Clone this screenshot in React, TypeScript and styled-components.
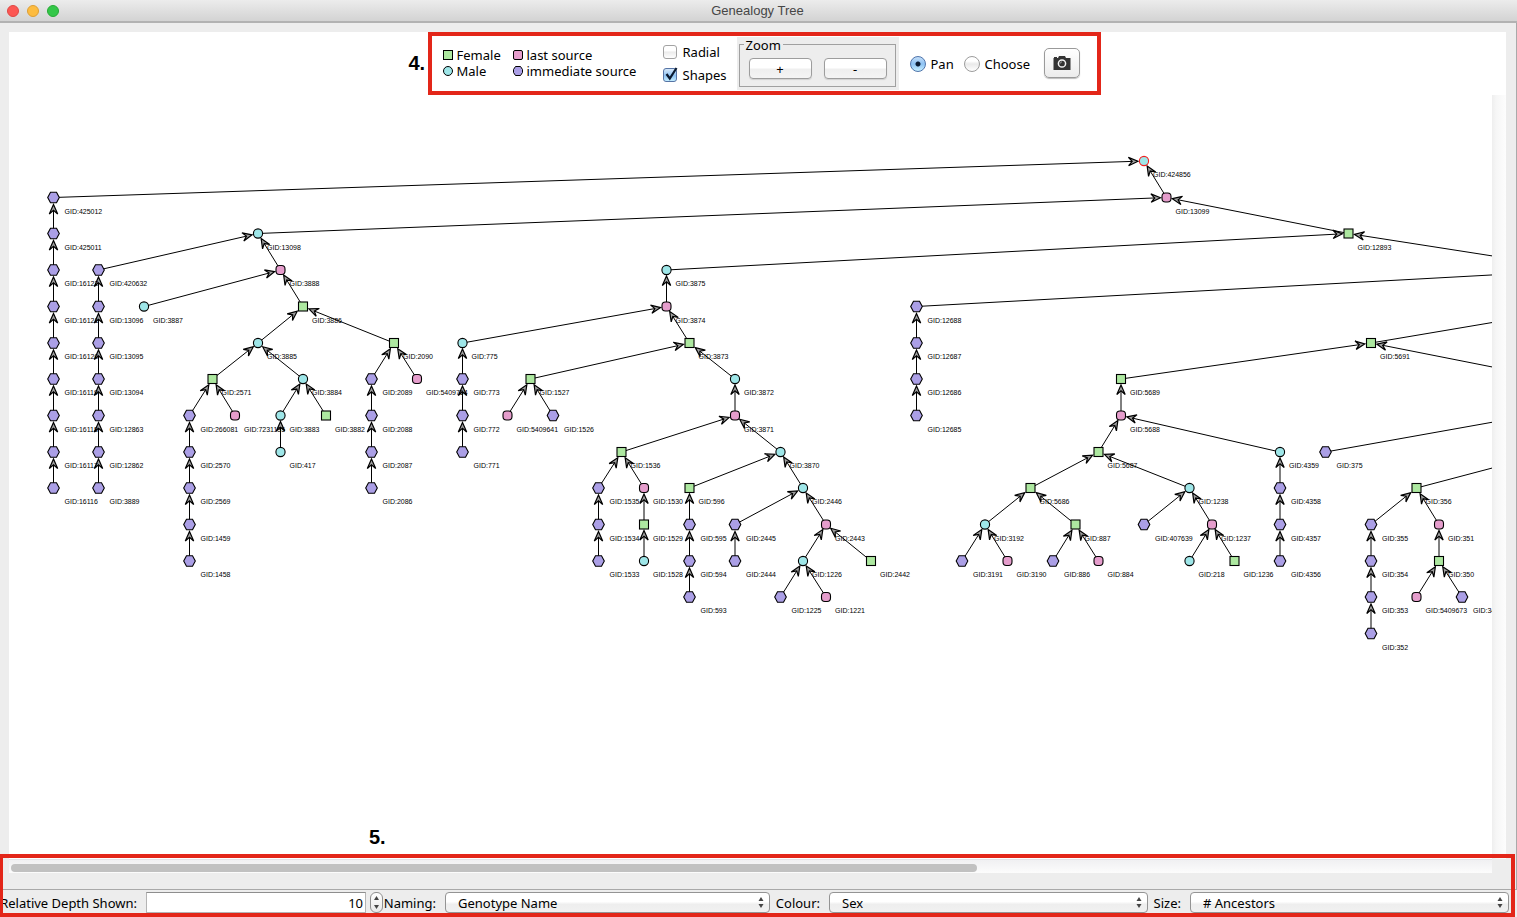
import React, { useState } from 'react';
import styled, { createGlobalStyle } from 'styled-components';

const UI_FONT = '"Noto Sans", "Open Sans", sans-serif';
const TITLE_FONT = '"Liberation Sans", Arial, sans-serif';
const MARK_RED = '#e32619';

type Kind = 'female' | 'male' | 'last' | 'immediate';

const FILL: Record<Kind, string> = {
  female: '#ade8a0',
  male: '#9ee6e8',
  last: '#e59dcc',
  immediate: '#ab9fe6',
};

interface TreeNode {
  id: string;
  col: number;
  row: number;
  kind: Kind;
  parent?: string;
  hidden?: boolean;
}

const n = (id: string, col: number, row: number, kind: Kind, parent?: string): TreeNode => ({
  id,
  col,
  row,
  kind,
  parent,
});

/* A straight line of descent: every entry is the child of the one before it. */
const chain = (ids: string[], col: number, row: number, parent?: string): TreeNode[] =>
  ids.map((id, i) => n(id, col, row + i, 'immediate', i === 0 ? parent : ids[i - 1]));

const NODES: TreeNode[] = [
  n('424856', 48, 0, 'male'),
  n('13099', 49, 1, 'last', '424856'),
  ...chain(
    ['425012', '425011', '16122', '16121', '16120', '16119', '16118', '16117', '16116'],
    0,
    1,
    '424856',
  ),
  n('13098', 9, 2, 'male', '13099'),
  ...chain(['420632', '13096', '13095', '13094', '12863', '12862', '3889'], 2, 3, '13098'),
  n('3888', 10, 3, 'last', '13098'),
  n('3887', 4, 4, 'male', '3888'),
  n('3886', 11, 4, 'female', '3888'),
  n('3885', 9, 5, 'male', '3886'),
  n('2090', 15, 5, 'female', '3886'),
  n('2571', 7, 6, 'female', '3885'),
  n('3884', 11, 6, 'male', '3885'),
  ...chain(['266081', '2570', '2569', '1459', '1458'], 6, 7, '2571'),
  n('7231135', 8, 7, 'last', '2571'),
  n('3883', 10, 7, 'male', '3884'),
  n('417', 10, 8, 'male', '3883'),
  n('3882', 12, 7, 'female', '3884'),
  ...chain(['2089', '2088', '2087', '2086'], 14, 6, '2090'),
  n('5409764', 16, 6, 'last', '2090'),
  n('12893', 57, 2, 'female', '13099'),
  n('3875', 27, 3, 'male', '12893'),
  n('3874', 27, 4, 'last', '3875'),
  n('775', 18, 5, 'male', '3874'),
  ...chain(['773', '772', '771'], 18, 6, '775'),
  n('3873', 28, 5, 'female', '3874'),
  n('1527', 21, 6, 'female', '3873'),
  n('5409641', 20, 7, 'last', '1527'),
  n('1526', 22, 7, 'immediate', '1527'),
  n('3872', 30, 6, 'male', '3873'),
  n('3871', 30, 7, 'last', '3872'),
  n('1536', 25, 8, 'female', '3871'),
  n('3870', 32, 8, 'male', '3871'),
  ...chain(['1535', '1534', '1533'], 24, 9, '1536'),
  n('1530', 26, 9, 'last', '1536'),
  n('1529', 26, 10, 'female', '1530'),
  n('1528', 26, 11, 'male', '1529'),
  n('596', 28, 9, 'female', '3870'),
  ...chain(['595', '594', '593'], 28, 10, '596'),
  n('2446', 33, 9, 'male', '3870'),
  ...chain(['2445', '2444'], 30, 10, '2446'),
  n('2443', 34, 10, 'last', '2446'),
  n('1226', 33, 11, 'male', '2443'),
  n('2442', 36, 11, 'female', '2443'),
  n('1225', 32, 12, 'immediate', '1226'),
  n('1221', 34, 12, 'last', '1226'),
  { ...n('right-a', 67.3, 3, 'last', '12893'), hidden: true },
  { ...n('right-b', 67.5, 4, 'female'), hidden: true },
  { ...n('right-c', 66, 6, 'male', '5691'), hidden: true },
  { ...n('right-d', 65, 7, 'male'), hidden: true },
  { ...n('right-e', 66, 8, 'male'), hidden: true },
  ...chain(['12688', '12687', '12686', '12685'], 38, 4, 'right-a'),
  n('5691', 58, 5, 'female', 'right-b'),
  n('5689', 47, 6, 'female', '5691'),
  n('5688', 47, 7, 'last', '5689'),
  n('5687', 46, 8, 'female', '5688'),
  n('4359', 54, 8, 'male', '5688'),
  ...chain(['4358', '4357', '4356'], 54, 9, '4359'),
  n('5686', 43, 9, 'female', '5687'),
  n('1238', 50, 9, 'male', '5687'),
  n('3192', 41, 10, 'male', '5686'),
  n('887', 45, 10, 'female', '5686'),
  n('3191', 40, 11, 'immediate', '3192'),
  n('3190', 42, 11, 'last', '3192'),
  n('886', 44, 11, 'immediate', '887'),
  n('884', 46, 11, 'last', '887'),
  n('407639', 48, 10, 'immediate', '1238'),
  n('1237', 51, 10, 'last', '1238'),
  n('218', 50, 11, 'male', '1237'),
  n('1236', 52, 11, 'female', '1237'),
  n('375', 56, 8, 'immediate', 'right-d'),
  n('356', 60, 9, 'female', 'right-e'),
  ...chain(['355', '354', '353', '352'], 58, 10, '356'),
  n('351', 61, 10, 'last', '356'),
  n('350', 61, 11, 'female', '351'),
  n('5409673', 60, 12, 'last', '350'),
  n('349', 62, 12, 'immediate', '350'),
];

const BY_ID = new Map(NODES.map((node) => [node.id, node]));

const half = (v: number) => Math.round(v * 2) / 2;
const px = (node: TreeNode) => half(44.3 + node.col * 22.72);
const py = (node: TreeNode) => half(66 + node.row * 36.35);

/* Distance from a node's centre to its outline along a direction. */
const reach = (kind: Kind, dx: number, dy: number) => {
  if (kind === 'female') return 5 / Math.max(Math.abs(dx), Math.abs(dy));
  return kind === 'immediate' ? 6 : 5;
};

const GlobalStyle = createGlobalStyle`
  *, *::before, *::after { box-sizing: border-box; }
  body { margin: 0; background: #ededed; }
`;

const Window = styled.div`
  position: relative;
  display: flex;
  flex-direction: column;
  min-height: 100vh;
  overflow: hidden;
  background: #ededed;
  color: #000;
  font: 13px/16px ${UI_FONT};
`;

const TitleBar = styled.header`
  display: grid;
  grid-template-columns: 1fr auto 1fr;
  align-items: center;
  height: 23px;
  flex: none;
  padding: 0 9px 0 7px;
  border-bottom: 2px solid #b2b2b2;
  background: linear-gradient(#ececec, #d3d3d3);
`;

const Lights = styled.div`
  display: flex;
  gap: 8px;
`;

const Light = styled.button<{ $fill: string; $edge: string }>`
  width: 12px;
  height: 12px;
  padding: 0;
  border: 1px solid ${(p) => p.$edge};
  border-radius: 50%;
  background: ${(p) => p.$fill};
`;

const Title = styled.h1`
  margin: 0;
  padding-top: 1px;
  color: #464646;
  font: 13px/20px ${TITLE_FONT};
`;

const Body = styled.main`
  display: flex;
  flex: 1;
  flex-direction: column;
  padding: 9px 10px 16px 9px;
  border-right: 1px solid #a9a9a9;
`;

const TopStrip = styled.div`
  display: flex;
  justify-content: center;
  align-items: center;
  padding-right: 6px;
  background: #fff;
`;

const Mark = styled.span`
  font: bold 20px/24px ${TITLE_FONT};
`;

const StripMark = styled(Mark)`
  width: 19px;
  padding-bottom: 2px;
`;

const CanvasMark = styled(Mark)`
  position: absolute;
  left: 360px;
  bottom: 10px;
`;

const ToolPanel = styled.div`
  display: flex;
  align-items: center;
  height: 63px;
  padding: 0 17px 0 11px;
  border: 4px solid ${MARK_RED};
`;

const Legend = styled.ul`
  display: grid;
  grid-template-columns: 70px 150px;
  margin: 0;
  padding: 0 0 2px;
  list-style: none;
`;

const LegendItem = styled.li`
  display: flex;
  align-items: center;
  gap: 4px;
  white-space: nowrap;
`;

const CheckColumn = styled.div`
  display: grid;
  grid-auto-rows: 23px;
  width: 74px;
`;

const Option = styled.label<{ $gap: number; $width?: number }>`
  position: relative;
  display: flex;
  align-items: center;
  gap: ${(p) => p.$gap}px;
  width: ${(p) => (p.$width ? `${p.$width}px` : 'auto')};
`;

const CheckBox = styled.input`
  appearance: none;
  width: 14px;
  height: 14px;
  margin: 0;
  border: 1px solid #a3a3a3;
  border-radius: 3px;
  background: linear-gradient(#fff 40%, #ececec 50%, #fff);

  &:checked {
    border-color: #5674a5;
    background: linear-gradient(#d6e8fa, #8fc3f3 55%, #c2ecff);
  }
  & + svg {
    display: none;
  }
  &:checked + svg {
    display: block;
  }
`;

const CheckMark = styled.svg`
  position: absolute;
  left: 0;
  top: 2px;
`;

const RadioButton = styled.input`
  appearance: none;
  width: 16px;
  height: 16px;
  margin: 0;
  border: 1px solid #9c9c9c;
  border-radius: 50%;
  background: linear-gradient(#fff 30%, #e9e9e9 50%, #fff);

  &:checked {
    border-color: #4f74ab;
    background:
      radial-gradient(circle, #0b1c33 2px, transparent 3px),
      linear-gradient(#c4def8, #8cc2f4 50%, #c8f0ff);
  }
`;

const ZoomPanel = styled.div`
  width: 162px;
  height: 53px;
  margin-right: 11px;
  padding: 0 3px 0 2px;
  background: #ededed;
`;

const ZoomGroup = styled.fieldset`
  margin: 0;
  padding: 0;
  border: 1px solid #a0a0a0;
`;

const ZoomLegend = styled.legend`
  margin-left: 4px;
  padding: 1px 2px 0;
  line-height: 14px;
`;

const ZoomButtons = styled.div`
  display: flex;
  gap: 12px;
  padding: 6px 8px 7px 9px;
`;

const PushButton = styled.button`
  flex: 1;
  height: 21px;
  padding: 0;
  border: 1px solid #9d9d9d;
  border-radius: 4px;
  background: linear-gradient(#fff 45%, #efefef 55%, #f4f4f4);
  box-shadow: 0 1px 1px #d0d0d0;
  color: #000;
  font: 13px/18px ${UI_FONT};
`;

const CameraButton = styled.button`
  display: flex;
  align-items: center;
  justify-content: center;
  width: 36px;
  height: 30px;
  margin-bottom: 1px;
  padding: 0 0 1px;
  border: 1px solid #9a9a9a;
  border-radius: 5px;
  background: linear-gradient(#fff, #ececec);
  box-shadow: 0 1px 1px #bdbdbd;
`;

const ScrollArea = styled.div`
  display: flex;
  flex: 1;
  min-height: 600px;
`;

const Canvas = styled.div`
  position: relative;
  display: flex;
  flex: 1;
  overflow: hidden;
  background: #fff;
`;

const TreeSvg = styled.svg`
  flex: 1;
  width: 100%;
  font: 7px ${TITLE_FONT};
`;

const VerticalTrack = styled.div`
  width: 14px;
  background: linear-gradient(to right, #eeeeee, #f6f6f6 30%, #fdfdfd);
`;

const HorizontalTrack = styled.div`
  display: flex;
  height: 14px;
  margin-right: 14px;
  padding: 4px 2px 1px;
  border-top: 1px solid #e4e2e8;
  background: linear-gradient(#f0f0f2, #fcfcfc);
`;

const Thumb = styled.div`
  flex: 966;
  height: 8px;
  border-radius: 4px;
  background: #c1c1c1;
`;

const ThumbRest = styled.div`
  flex: 513;
`;

const BottomBar = styled.footer`
  display: grid;
  grid-template-columns: 146px 220px 18px 61px 325fr 59px 319fr 42px 319fr;
  align-items: center;
  height: 28px;
  flex: none;
  padding: 0 8px 2px 0;
  border-top: 1px solid #a9a9a9;
`;

const FieldLabel = styled.label`
  justify-self: end;
  padding-right: 9px;
  white-space: nowrap;
`;

const DepthInput = styled.input`
  width: 100%;
  height: 21px;
  padding: 0 2px;
  border: 1px solid #b4b4b4;
  border-top-color: #8e8e8e;
  border-radius: 0;
  background: #fff;
  font: 13px/16px ${UI_FONT};
  text-align: right;
`;

const Stepper = styled.div`
  display: flex;
  flex-direction: column;
  width: 13px;
  height: 21px;
  margin-left: 4px;
  overflow: hidden;
  border: 1px solid #8f8f8f;
  border-radius: 6px;
  background: linear-gradient(#fff, #e8e8e8);
`;

const StepButton = styled.button`
  display: flex;
  flex: 1;
  align-items: center;
  justify-content: center;
  padding: 0;
  border: 0;
  background: none;
`;

const SelectBox = styled.div`
  position: relative;
  display: flex;
`;

const Select = styled.select`
  appearance: none;
  width: 100%;
  height: 21px;
  padding: 0 20px 0 12px;
  border: 1px solid #949494;
  border-radius: 4px;
  background: linear-gradient(#fff 45%, #eeeeee 60%, #f1f1f1);
  color: #000;
  font: 13px/18px ${UI_FONT};
`;

const SelectArrows = styled.svg`
  position: absolute;
  top: 5px;
  right: 6px;
  pointer-events: none;
`;

const BottomFrame = styled.div`
  position: absolute;
  right: 2px;
  bottom: 0;
  left: 0;
  height: 63px;
  border: 4px solid ${MARK_RED};
  border-left-width: 3px;
  pointer-events: none;
`;

function Shape({ kind, selected }: { kind: Kind; selected?: boolean }) {
  const paint = { fill: FILL[kind], stroke: selected ? '#f02020' : '#000', strokeWidth: 1.1 };
  if (kind === 'female') return <rect x={-4.5} y={-4.5} width={9} height={9} {...paint} />;
  if (kind === 'male') return <circle r={4.6} {...paint} />;
  if (kind === 'last') return <rect x={-4.5} y={-4.5} width={9} height={9} rx={3.4} {...paint} />;
  return <path d="M-5.8 0L-3 -5.3H3L5.8 0L3 5.3H-3Z" {...paint} />;
}

function Edge({ from, to }: { from: TreeNode; to: TreeNode }) {
  const x1 = px(from);
  const y1 = py(from);
  const x2 = px(to);
  const y2 = py(to);
  const len = Math.hypot(x2 - x1, y2 - y1);
  const dx = (x2 - x1) / len;
  const dy = (y2 - y1) / len;
  const r = reach(to.kind, dx, dy);
  const tipX = x2 - dx * r;
  const tipY = y2 - dy * r;
  const angle = (Math.atan2(dy, dx) * 180) / Math.PI;
  return (
    <g>
      <line x1={x1} y1={y1} x2={tipX - dx * 6} y2={tipY - dy * 6} stroke="#000" />
      <path
        d="M-1 0L-10.5 4.2L-6.8 0L-10.5 -4.2Z"
        transform={`translate(${tipX} ${tipY}) rotate(${angle})`}
        fill="#a0a0a0"
        stroke="#000"
        strokeWidth={1.2}
      />
    </g>
  );
}

function Tree() {
  return (
    <TreeSvg role="img" aria-label="Genealogy tree">
      {NODES.map((node) => {
        const parent = node.parent ? BY_ID.get(node.parent) : undefined;
        return parent ? <Edge key={node.id} from={node} to={parent} /> : null;
      })}
      {NODES.filter((node) => !node.hidden).map((node) => (
        <g key={node.id} transform={`translate(${px(node)} ${py(node)})`}>
          <Shape kind={node.kind} selected={node.id === '424856'} />
          <text x={node.kind === 'immediate' ? 11 : 9} y={16}>
            {`GID:${node.id}`}
          </text>
        </g>
      ))}
    </TreeSvg>
  );
}

function Swatch({ kind }: { kind: Kind }) {
  const paint = { fill: FILL[kind], stroke: '#000' };
  return (
    <svg width="10" height="10" viewBox="0 0 10 10" aria-hidden="true">
      {kind === 'female' && <rect x="0.5" y="0.5" width="9" height="9" {...paint} />}
      {kind === 'male' && <circle cx="5" cy="5" r="4.5" {...paint} />}
      {kind === 'last' && <rect x="0.5" y="0.5" width="9" height="9" rx="1.5" {...paint} />}
      {kind === 'immediate' && (
        <path d="M0.5 3.5L2.5 0.5H7.5L9.5 3.5V6.5L7.5 9.5H2.5L0.5 6.5Z" {...paint} />
      )}
    </svg>
  );
}

const LEGEND: [Kind, string][] = [
  ['female', 'Female'],
  ['last', 'last source'],
  ['male', 'Male'],
  ['immediate', 'immediate source'],
];

function Picker({ id, options }: { id: string; options: string[] }) {
  return (
    <SelectBox>
      <Select id={id} defaultValue={options[0]}>
        {options.map((o) => (
          <option key={o}>{o}</option>
        ))}
      </Select>
      <SelectArrows width="6" height="11" viewBox="0 0 6 11" aria-hidden="true">
        <path d="M3 0L5.5 4H0.5ZM3 11L5.5 7H0.5Z" fill="#444" />
      </SelectArrows>
    </SelectBox>
  );
}

export default function App() {
  const [mode, setMode] = useState('pan');
  const [depth, setDepth] = useState(10);

  return (
    <Window>
      <GlobalStyle />
      <TitleBar>
        <Lights>
          <Light $fill="#fc5753" $edge="#df4744" aria-label="Close" />
          <Light $fill="#fdbc40" $edge="#de9f34" aria-label="Minimise" />
          <Light $fill="#34c749" $edge="#27aa35" aria-label="Full size" />
        </Lights>
        <Title>Genealogy Tree</Title>
      </TitleBar>

      <Body>
        <TopStrip>
          <StripMark>4.</StripMark>
          <ToolPanel>
            <Legend>
              {LEGEND.map(([kind, text]) => (
                <LegendItem key={kind}>
                  <Swatch kind={kind} />
                  {text}
                </LegendItem>
              ))}
            </Legend>
            <CheckColumn>
              <Option $gap={6}>
                <CheckBox type="checkbox" />
                <CheckMark width="16" height="18" viewBox="0 0 16 18" aria-hidden="true">
                  <path d="M3.5 8L6.8 12.5L13.5 2" fill="none" stroke="#0a1a30" strokeWidth="2.2" />
                </CheckMark>
                Radial
              </Option>
              <Option $gap={6}>
                <CheckBox type="checkbox" defaultChecked />
                <CheckMark width="16" height="18" viewBox="0 0 16 18" aria-hidden="true">
                  <path d="M3.5 8L6.8 12.5L13.5 2" fill="none" stroke="#0a1a30" strokeWidth="2.2" />
                </CheckMark>
                Shapes
              </Option>
            </CheckColumn>
            <ZoomPanel>
              <ZoomGroup>
                <ZoomLegend>Zoom</ZoomLegend>
                <ZoomButtons>
                  <PushButton aria-label="Zoom in">+</PushButton>
                  <PushButton aria-label="Zoom out">-</PushButton>
                </ZoomButtons>
              </ZoomGroup>
            </ZoomPanel>
            <Option $gap={5} $width={54}>
              <RadioButton
                type="radio"
                name="mode"
                checked={mode === 'pan'}
                onChange={() => setMode('pan')}
              />
              Pan
            </Option>
            <Option $gap={5} $width={80}>
              <RadioButton
                type="radio"
                name="mode"
                checked={mode === 'choose'}
                onChange={() => setMode('choose')}
              />
              Choose
            </Option>
            <CameraButton aria-label="Save picture">
              <svg width="18" height="14" viewBox="0 0 18 14" aria-hidden="true">
                <path d="M1 2V1H4V2H5L6 0H12L13 2H17.5V14H0.5V2Z" fill="#333" />
                <circle cx="9" cy="7.5" r="3.6" fill="#333" stroke="#f2f2f2" strokeWidth="1.5" />
                <path d="M7.3 7.5A1.8 1.8 0 0 1 9 5.8" fill="none" stroke="#bbb" strokeWidth="0.8" />
              </svg>
            </CameraButton>
          </ToolPanel>
        </TopStrip>

        <ScrollArea>
          <Canvas>
            <Tree />
            <CanvasMark>5.</CanvasMark>
          </Canvas>
          <VerticalTrack />
        </ScrollArea>
        <HorizontalTrack>
          <Thumb />
          <ThumbRest />
        </HorizontalTrack>
      </Body>

      <BottomBar>
        <FieldLabel htmlFor="depth">Relative Depth Shown:</FieldLabel>
        <DepthInput
          id="depth"
          type="text"
          value={depth}
          onChange={(e) => setDepth(Number(e.target.value) || 0)}
        />
        <Stepper>
          <StepButton aria-label="Increase depth" onClick={() => setDepth(depth + 1)}>
            <svg width="5" height="4" viewBox="0 0 5 4" aria-hidden="true">
              <path d="M2.5 0L5 4H0Z" fill="#444" />
            </svg>
          </StepButton>
          <StepButton aria-label="Decrease depth" onClick={() => setDepth(depth - 1)}>
            <svg width="5" height="4" viewBox="0 0 5 4" aria-hidden="true">
              <path d="M2.5 4L5 0H0Z" fill="#444" />
            </svg>
          </StepButton>
        </Stepper>
        <FieldLabel htmlFor="naming">Naming:</FieldLabel>
        <Picker id="naming" options={['Genotype Name']} />
        <FieldLabel htmlFor="colour">Colour:</FieldLabel>
        <Picker id="colour" options={['Sex']} />
        <FieldLabel htmlFor="size">Size:</FieldLabel>
        <Picker id="size" options={['# Ancestors']} />
      </BottomBar>
      <BottomFrame />
    </Window>
  );
}
